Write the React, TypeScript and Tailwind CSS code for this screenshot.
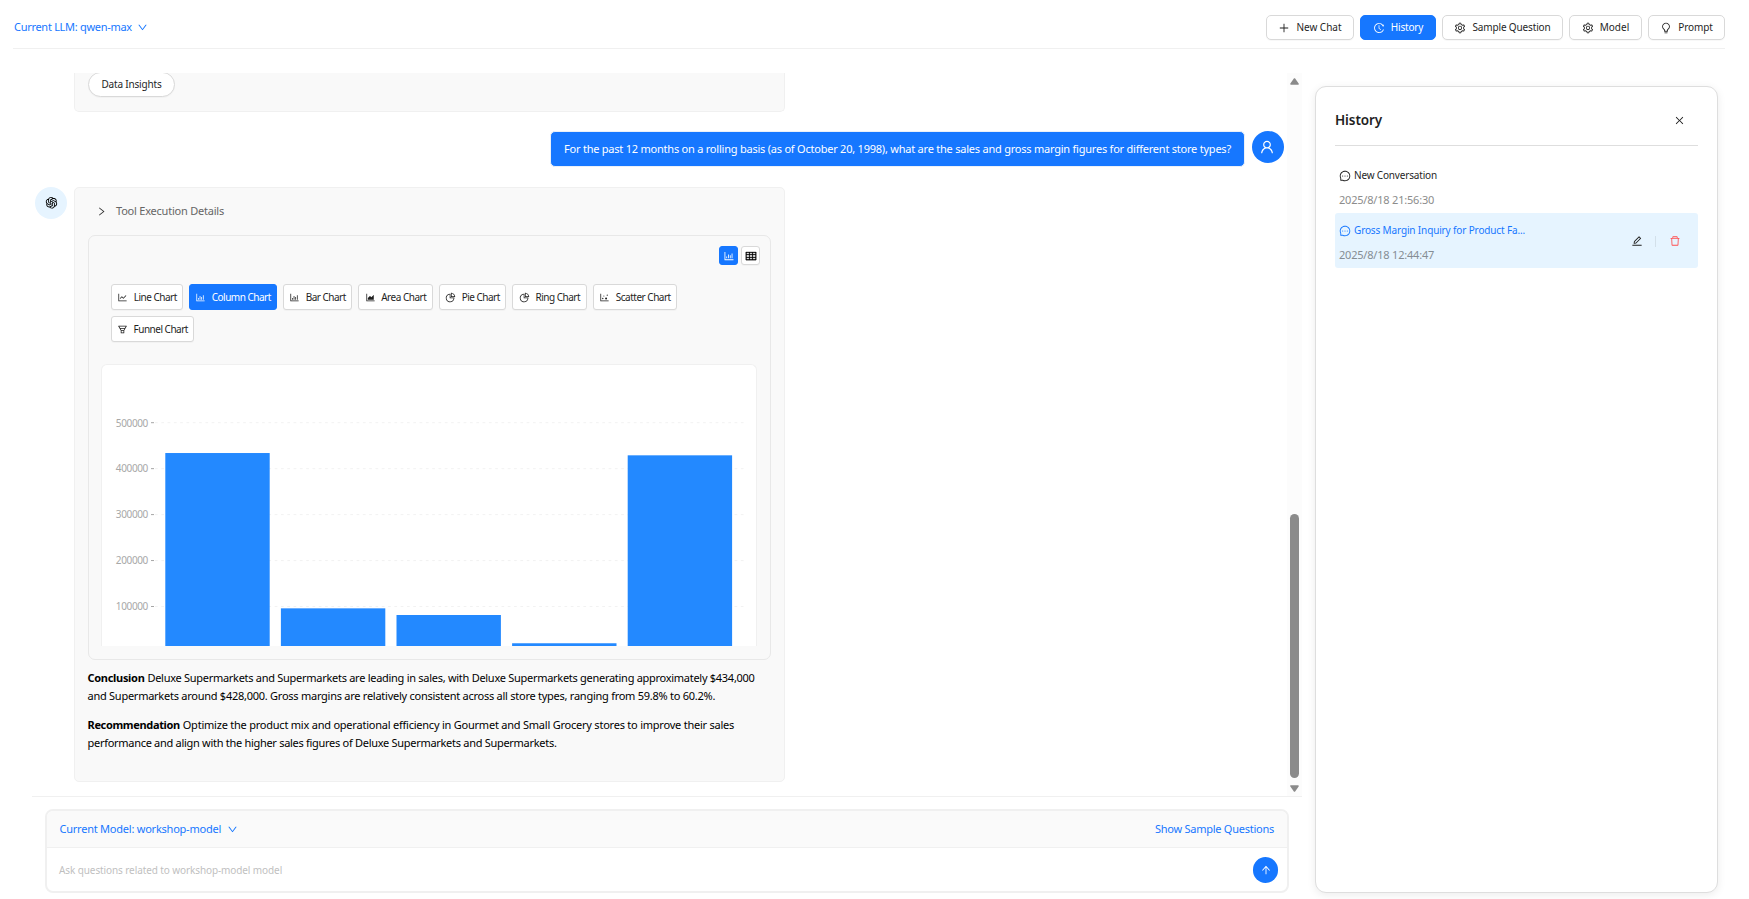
import type { ReactNode } from "react";
import {
  AiOutlineAreaChart,
  AiOutlineArrowUp,
  AiOutlineBarChart,
  AiOutlineBulb,
  AiOutlineClose,
  AiOutlineDelete,
  AiOutlineDotChart,
  AiOutlineDown,
  AiOutlineEdit,
  AiOutlineFunnelPlot,
  AiOutlineHistory,
  AiOutlineLineChart,
  AiOutlineMessage,
  AiOutlineOpenAI,
  AiOutlinePieChart,
  AiOutlinePlus,
  AiOutlineRight,
  AiOutlineSetting,
  AiOutlineTable,
  AiOutlineUser,
} from "react-icons/ai";

const bars = [434000, 96000, 81500, 20000, 429000];
const ticks = [500000, 400000, 300000, 200000, 100000];
const yOf = (value: number) => 652.45 - value * 0.0004595;

function HeaderButton({ icon, label, className }: { icon: ReactNode; label: string; className: string }) {
  return (
    <button className={`flex h-[25px] items-center justify-center gap-[6px] rounded-[5px] border text-[10px] ${className}`}>
      {icon}
      <span>{label}</span>
    </button>
  );
}

const plain = "border-[#d9d9d9] bg-white text-[#1f1f1f] shadow-[0_1px_1px_rgba(0,0,0,0.03)]";
const active = "border-[#1677ff] bg-[#1677ff] text-white";

const chartTypes = [
  { label: "Line Chart", icon: AiOutlineLineChart, width: "w-[72px]" },
  { label: "Column Chart", icon: AiOutlineBarChart, width: "w-[88px]", on: true },
  { label: "Bar Chart", icon: AiOutlineBarChart, width: "w-[69px]" },
  { label: "Area Chart", icon: AiOutlineAreaChart, width: "w-[75px]" },
  { label: "Pie Chart", icon: AiOutlinePieChart, width: "w-[67px]" },
  { label: "Ring Chart", icon: AiOutlinePieChart, width: "w-[75px]" },
  { label: "Scatter Chart", icon: AiOutlineDotChart, width: "w-[84px]" },
  { label: "Funnel Chart", icon: AiOutlineFunnelPlot, width: "w-[83px]" },
];

function ColumnChart() {
  return (
    <svg className="block h-[281px] w-[654px]" viewBox="102 365 654 281">
      {ticks.map((t) => (
        <g key={t}>
          <text x="148" y={yOf(t) + 3.8} textAnchor="end" fontSize="10" letterSpacing="-0.35" fill="#a8a8a8">
            {t}
          </text>
          <line x1="151" x2="154" y1={yOf(t)} y2={yOf(t)} stroke="#a6a6a6" />
          <line x1="155" x2="743.5" y1={yOf(t)} y2={yOf(t)} stroke="#f1f1f1" strokeWidth="0.9" strokeDasharray="2.7 3.6" />
        </g>
      ))}
      {bars.map((v, i) => (
        <rect key={i} x={165.3 + i * 115.6} y={yOf(v)} width="104.4" height={652.45 - yOf(v)} fill="#2389ff" />
      ))}
    </svg>
  );
}

function Header() {
  return (
    <header className="ml-[13px] mr-6 flex h-[49px] shrink-0 items-center justify-between border-b border-[#f0f0f0] pt-[7px]">
      <button className="flex items-center gap-[5px] pl-px text-[11px] tracking-[-0.29px] text-[#1677ff]">
        <span>Current LLM: qwen-max</span>
        <AiOutlineDown size={11} />
      </button>
      <div className="flex gap-[6px]">
        <HeaderButton icon={<AiOutlinePlus size={12} />} label="New Chat" className={`w-[88px] ${plain}`} />
        <HeaderButton icon={<AiOutlineHistory size={12} />} label="History" className={`w-[76px] tracking-[-0.16px] ${active}`} />
        <HeaderButton icon={<AiOutlineSetting size={12} />} label="Sample Question" className={`w-[121px] tracking-[-0.15px] ${plain}`} />
        <HeaderButton icon={<AiOutlineSetting size={12} />} label="Model" className={`w-[73px] ${plain}`} />
        <HeaderButton icon={<AiOutlineBulb size={12} />} label="Prompt" className={`w-[77px] tracking-[-0.12px] ${plain}`} />
      </div>
    </header>
  );
}

function ResultCard() {
  return (
    <div className="h-[595px] w-[711px] rounded-[5px] border border-[#f0f0f0] bg-[#f9f9f9] px-[13px]">
      <div className="flex h-[47px] items-center gap-[9px] pl-[8px] text-[11px] tracking-[-0.22px] text-[#666]">
        <AiOutlineRight size={11} className="text-[#333]" />
        <span>Tool Execution Details</span>
      </div>
      <div className="h-[425px] rounded-[7px] border border-[#e8e8e8]">
        <div className="flex justify-end gap-[3px] pr-[10px] pt-[10px]">
          <button className={`flex size-[19px] items-center justify-center rounded-[3px] border ${active}`}>
            <AiOutlineBarChart size={12} />
          </button>
          <button className={`flex size-[19px] items-center justify-center rounded-[3px] border ${plain}`}>
            <AiOutlineTable size={12} strokeWidth={24} className="text-black" />
          </button>
        </div>
        <div className="ml-[22px] mt-[19px] flex w-[637px] flex-wrap gap-[6px]">
          {chartTypes.map(({ label, icon: Icon, width, on }) => (
            <button
              key={label}
              className={`flex h-[26px] items-center justify-center gap-[5.5px] rounded-[3px] border text-[10px] tracking-[-0.5px] ${width} ${on ? active : plain}`}
            >
              <Icon size={11} />
              <span>{label}</span>
            </button>
          ))}
        </div>
        <div className="ml-3 mt-[22px] h-[282px] w-[656px] overflow-hidden rounded-t-[6px] border border-b-0 border-[#f0f0f0] bg-white">
          <ColumnChart />
        </div>
      </div>
      <div className="-ml-[0.5px] mt-[9px] space-y-[11px] whitespace-nowrap text-[11px] leading-[18px] text-black">
        <p>
          <strong className="tracking-[-0.3px]">Conclusion</strong>{" "}
          <span className="tracking-[-0.28px]">
            Deluxe Supermarkets and Supermarkets are leading in sales, with Deluxe Supermarkets generating approximately $434,000
          </span>
          <br />
          <span className="tracking-[-0.256px]">
            and Supermarkets around $428,000. Gross margins are relatively consistent across all store types, ranging from 59.8% to
            60.2%.
          </span>
        </p>
        <p>
          <strong className="tracking-[-0.34px]">Recommendation</strong>{" "}
          <span className="tracking-[-0.225px]">
            Optimize the product mix and operational efficiency in Gourmet and Small Grocery stores to improve their sales
          </span>
          <br />
          <span className="tracking-[-0.29px]">
            performance and align with the higher sales figures of Deluxe Supermarkets and Supermarkets.
          </span>
        </p>
      </div>
    </div>
  );
}

function Conversation() {
  return (
    <div className="flex h-[723px] overflow-hidden">
      <div className="w-[1255px]">
        <div className="ml-[42px] flex h-[39px] w-[711px] items-start rounded-b-[5px] border border-t-0 border-[#f0f0f0] bg-[#f9f9f9] pl-[13px]">
          <button className={`-mt-px flex h-[25px] w-[87px] items-center justify-center rounded-full border text-[10px] tracking-[-0.18px] ${plain}`}>
            Data Insights
          </button>
        </div>
        <div className="mr-[3px] mt-[19px] flex h-9 justify-end gap-[7px]">
          <div className="flex w-[695px] items-center justify-center whitespace-nowrap rounded-[5px] border border-[#eaf0f8] bg-[#1677ff] text-[11px] tracking-[-0.225px] text-white">
            For the past 12 months on a rolling basis (as of October 20, 1998), what are the sales and gross margin figures for different
            store types?
          </div>
          <div className="flex size-8 items-center justify-center rounded-full bg-[#1677ff] pr-[2px] text-white">
            <AiOutlineUser size={16} />
          </div>
        </div>
        <div className="ml-[3px] mt-5 flex gap-[7px]">
          <div className="flex size-8 items-center justify-center rounded-full bg-[#e6f4ff] pb-px text-black">
            <AiOutlineOpenAI size={15} />
          </div>
          <ResultCard />
        </div>
      </div>
      <div className="flex w-[15px] flex-col items-center bg-[#fcfcfc] pt-[5px]">
        <svg className="h-[7px] w-[9px]" viewBox="0 0 9 7">
          <path d="M4.5 1 8 6H1z" fill="#8b8b8b" stroke="#8b8b8b" strokeWidth="1.6" strokeLinejoin="round" />
        </svg>
        <div className="mt-[429px] h-[264px] w-[9px] rounded-full bg-[#8b8b8b]" />
        <svg className="mt-[7px] h-[7px] w-[9px]" viewBox="0 0 9 7">
          <path d="M4.5 6 1 1h7z" fill="#8b8b8b" stroke="#8b8b8b" strokeWidth="1.6" strokeLinejoin="round" />
        </svg>
      </div>
    </div>
  );
}

function Composer() {
  return (
    <div className="border-t border-[#f0f0f0] pl-[13px] pr-[13px] pt-3">
      <div className="h-[84px] overflow-hidden rounded-[8px] border-2 border-[#f0f0f0] bg-white">
        <div className="flex h-[37px] items-center justify-between border-b border-[#f0f0f0] bg-[#fafafa] pl-[12.5px] pr-[13px] text-[11px] text-[#1677ff]">
          <button className="flex items-center gap-[6px] tracking-[-0.23px]">
            <span>Current Model: workshop-model</span>
            <AiOutlineDown size={11} />
          </button>
          <button className="tracking-[-0.25px]">Show Sample Questions</button>
        </div>
        <div className="flex h-[43px] items-center justify-between pl-3 pr-[9px] pt-px">
          <span className="pt-px text-[10px] tracking-[-0.1px] text-[#bfbfbf]">Ask questions related to workshop-model model</span>
          <button className="flex h-[26px] w-[25px] items-center justify-center rounded-full bg-[#1677ff] text-white">
            <AiOutlineArrowUp size={12} />
          </button>
        </div>
      </div>
    </div>
  );
}

function HistoryPanel() {
  return (
    <aside className="ml-[13px] mt-[13px] h-[807px] w-[403px] rounded-[11px] border border-[#dedede] bg-white px-[19px] shadow-[0_2px_8px_rgba(0,0,0,0.08)]">
      <div className="flex h-[59px] items-center justify-between border-b border-[#dedede] pr-[13px] pt-[9px] text-[#1f1f1f]">
        <h2 className="text-[13.5px] font-semibold tracking-[-0.1px]">History</h2>
        <AiOutlineClose size={11} />
      </div>
      <div className="mt-3">
        <div className="h-[55px] pl-1 pt-[10px]">
          <div className="flex h-[15px] items-center gap-[3px] text-[10px] tracking-[-0.17px] text-[#1f1f1f]">
            <AiOutlineMessage size={12} />
            <span>New Conversation</span>
          </div>
          <div className="mt-[9px] text-[11px] leading-4 tracking-[-0.2px] text-[#8c8c8c]">2025/8/18 21:56:30</div>
        </div>
        <div className="flex h-[55px] items-center justify-between rounded-[3px] bg-[#e6f4ff] pl-1 pr-[17px]">
          <div className="h-full pt-[10px]">
            <div className="flex h-[15px] items-center gap-[3px] text-[10px] tracking-[-0.14px] text-[#1677ff]">
              <AiOutlineMessage size={12} />
              <span>Gross Margin Inquiry for Product Fa...</span>
            </div>
            <div className="mt-[9px] text-[11px] leading-4 tracking-[-0.2px] text-[#858d94]">2025/8/18 12:44:47</div>
          </div>
          <div className="flex items-center pt-px">
            <AiOutlineEdit size={12} className="text-[#1f1f1f]" />
            <span className="ml-[12px] mr-[13px] h-[11px] w-px bg-[#d3e0ea]" />
            <AiOutlineDelete size={12} className="text-[#ff4d4f]" />
          </div>
        </div>
      </div>
    </aside>
  );
}

export default function App() {
  return (
    <div className="flex h-[899px] w-[1749px] flex-col overflow-hidden bg-white font-['Noto_Sans',sans-serif]">
      <Header />
      <main className="flex pt-6">
        <section className="ml-8 w-[1270px]">
          <Conversation />
          <Composer />
        </section>
        <HistoryPanel />
      </main>
    </div>
  );
}
